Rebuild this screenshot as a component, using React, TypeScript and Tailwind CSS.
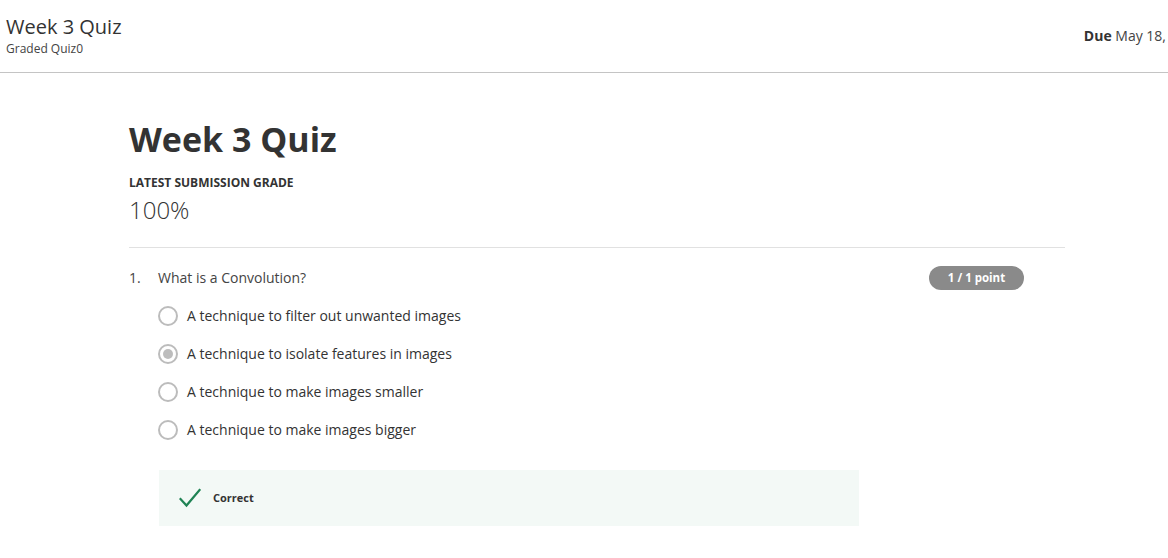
import React from "react";

const options = [
  { text: "A technique to filter out unwanted images", checked: false },
  { text: "A technique to isolate features in images", checked: true },
  { text: "A technique to make images smaller", checked: false },
  { text: "A technique to make images bigger", checked: false },
];

export default function App() {
  return (
    <div className="min-h-[558px] bg-white text-[#333]" style={{ fontFamily: '"Open Sans", "Liberation Sans", sans-serif' }}>
      <header className="flex h-[73px] items-start justify-between border-b border-[#c4c4c4] pl-[6px] pr-[2px]">
        <div className="pt-[13px]">
          <div className="text-[20px] leading-[28px] text-[#333]">Week 3 Quiz</div>
          <div className="text-[12px] leading-[16px] text-[#444]">Graded Quiz0</div>
        </div>
        <div className="whitespace-nowrap pt-[26px] text-[14px] leading-[20px] text-[#444]">
          <span className="font-bold text-[#333]">Due</span> May 18,
        </div>
      </header>
      <main className="ml-[129px] w-[936px]">
        <h1 className="pt-[44px] text-[34px] font-bold leading-[44px] text-[#333]">Week 3 Quiz</h1>
        <div className="mt-[14px] text-[12px] font-bold leading-[16px] text-[#333]">LATEST SUBMISSION GRADE</div>
        <div className="mt-[3px] text-[24px] font-light leading-[32px] text-[#333]">100%</div>
        <div className="mt-[21px] border-t border-[#e1e1e1]" />
        <div className="flex items-start pt-[18px]">
          <div className="w-[29px] text-[14px] leading-[24px] text-[#444]">1.</div>
          <div className="flex-1">
            <div className="flex h-[24px] items-center justify-between pr-[41px]">
              <div className="text-[14px] leading-[20px] text-[#444]">What is a Convolution?</div>
              <div className="flex h-[24px] w-[95px] items-center justify-center rounded-full bg-[#8a8a8a] text-[11.5px] font-bold text-white">
                1 / 1 point
              </div>
            </div>
            <div className="mt-[16px] flex flex-col gap-[18px]">
              {options.map((o) => (
                <div key={o.text} className="flex h-[20px] items-center">
                  <div className="flex h-[20px] w-[20px] items-center justify-center rounded-full border-2 border-[#bcbcbc] bg-white">
                    {o.checked && <div className="h-[10px] w-[10px] rounded-full bg-[#bdbdbd]" />}
                  </div>
                  <div className="ml-[9px] text-[14px] leading-[20px] text-[#333]">{o.text}</div>
                </div>
              ))}
            </div>
            <div className="ml-[1px] mt-[30px] flex h-[56px] w-[700px] items-center bg-[#f3f9f6] pl-[20px]">
              <svg width="22" height="20" viewBox="0 0 22 20" fill="none">
                <path d="M1.5 11 L7.5 17.5 L20.5 2" stroke="#1f8354" strokeWidth="2.2" strokeLinecap="square" />
              </svg>
              <span className="ml-[12px] text-[11px] font-bold text-[#333]">Correct</span>
            </div>
          </div>
        </div>
      </main>
    </div>
  );
}
